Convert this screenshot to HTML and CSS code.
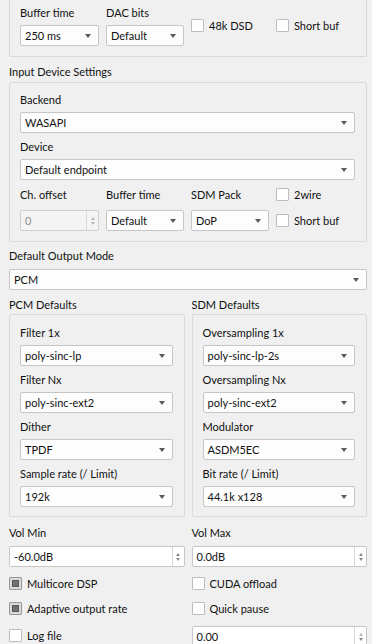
FILE: index.html
```html
<!DOCTYPE html>
<html lang="en">
<head>
    <meta charset="UTF-8">
    <title>Device Settings</title>
    <link rel="stylesheet" href="styles.css">
</head>
<body>
    <div class="page">
        <div class="group group-top">
            <div class="grid4">
                <div class="field">
                    <div class="lbl">Buffer time</div>
                    <div class="combo">250 ms</div>
                </div>
                <div class="field">
                    <div class="lbl">DAC bits</div>
                    <div class="combo">Default</div>
                </div>
                <label class="check mid"><span class="box"></span>48k DSD</label>
                <label class="check mid"><span class="box"></span>Short buf</label>
            </div>
        </div>

        <div class="title">Input Device Settings</div>
        <div class="group">
            <div class="lbl">Backend</div>
            <div class="combo gap">WASAPI</div>
            <div class="lbl">Device</div>
            <div class="combo">Default endpoint</div>
            <div class="grid4 rows">
                <div class="lbl flat">Ch. offset</div>
                <div class="lbl flat">Buffer time</div>
                <div class="lbl flat">SDM Pack</div>
                <label class="check"><span class="box"></span>2wire</label>
                <div class="spin disabled">
                    <span class="val">0</span>
                    <span class="arrows"><i class="up"></i><i class="dn"></i></span>
                </div>
                <div class="combo">Default</div>
                <div class="combo">DoP</div>
                <label class="check"><span class="box"></span>Short buf</label>
            </div>
        </div>

        <div class="title mode">Default Output Mode</div>
        <div class="combo">PCM</div>

        <div class="cols defaults">
            <div>
                <div class="title sub">PCM Defaults</div>
                <div class="group tall">
                    <div class="lbl">Filter 1x</div>
                    <div class="combo gap">poly-sinc-lp</div>
                    <div class="lbl">Filter Nx</div>
                    <div class="combo gap">poly-sinc-ext2</div>
                    <div class="lbl">Dither</div>
                    <div class="combo gap">TPDF</div>
                    <div class="lbl">Sample rate (/ Limit)</div>
                    <div class="combo">192k</div>
                </div>
            </div>
            <div>
                <div class="title sub">SDM Defaults</div>
                <div class="group tall">
                    <div class="lbl">Oversampling 1x</div>
                    <div class="combo gap">poly-sinc-lp-2s</div>
                    <div class="lbl">Oversampling Nx</div>
                    <div class="combo gap">poly-sinc-ext2</div>
                    <div class="lbl">Modulator</div>
                    <div class="combo gap">ASDM5EC</div>
                    <div class="lbl">Bit rate (/ Limit)</div>
                    <div class="combo">44.1k x128</div>
                </div>
            </div>
        </div>

        <div class="cols vol">
            <div>
                <div class="lbl">Vol Min</div>
                <div class="spin">
                    <span class="val">-60.0dB</span>
                    <span class="arrows"><i class="up"></i><i class="dn"></i></span>
                </div>
            </div>
            <div>
                <div class="lbl">Vol Max</div>
                <div class="spin">
                    <span class="val">0.0dB</span>
                    <span class="arrows"><i class="up"></i><i class="dn"></i></span>
                </div>
            </div>
        </div>

        <div class="cols opts">
            <label class="check"><span class="box on"></span>Multicore DSP</label>
            <label class="check"><span class="box"></span>CUDA offload</label>
            <label class="check"><span class="box on"></span>Adaptive output rate</label>
            <label class="check"><span class="box"></span>Quick pause</label>
            <label class="check"><span class="box"></span>Log file</label>
            <div class="spin">
                <span class="val">0.00</span>
                <span class="arrows dim"><i class="up"></i><i class="dn"></i></span>
            </div>
        </div>
    </div>
</body>
</html>
```

FILE: styles.css
```css
body { margin: 0; background: #f0f0f0; font-family: Lato, "Noto Sans", sans-serif; font-size: 11px; color: #111; overflow: hidden; }
.page { padding: 0 5px 0 9px; }

.group { border: 1px solid #d9d9d9; border-radius: 2px; padding: 10px 11px 10px 10px; }
.group-top { border-top: none; border-radius: 0 0 2px 2px; padding-top: 6px; padding-bottom: 10px; }
.group.tall { padding-top: 11px; padding-bottom: 9px; }

.title { line-height: 13px; margin: 8px 0 4px; white-space: nowrap; }
.title.mode { margin: 7px 0 7px; }
.title.sub { margin: 8px 0 3px; }

.lbl { line-height: 13px; height: 13px; margin-bottom: 6px; white-space: nowrap; }
.lbl.flat { margin: 0; align-self: center; }

.combo { height: 21px; box-sizing: border-box; border: 1px solid #c6c6c6; border-radius: 2px; background: #fdfdfd; display: flex; align-items: center; justify-content: space-between; padding: 0 7px 0 4px; white-space: nowrap; }
.combo::after { content: ""; border-left: 3.5px solid transparent; border-right: 3.5px solid transparent; border-top: 4px solid #5a5a5a; }
.combo.gap { margin-bottom: 7px; }

.grid4 { display: grid; grid-template-columns: 79px 78px 78px 1fr; column-gap: 7px; }
.grid4.rows { margin-top: 4px; grid-template-rows: 20px 21px; row-gap: 6px; }

.check { display: flex; align-items: center; gap: 5px; white-space: nowrap; }
.check.mid { align-self: center; margin-top: -1px; }
.box { width: 13px; height: 13px; box-sizing: border-box; border: 1px solid #bdbdbd; border-radius: 1px; background: #fff; display: flex; align-items: center; justify-content: center; }
.box.on { background: #dadada; border-color: #9a9a9a; }
.box.on::after { content: ""; width: 7px; height: 7px; box-sizing: border-box; background: #707070; border: 1px solid #5a5a5a; }

.spin { height: 21px; box-sizing: border-box; border: 1px solid #c6c6c6; border-radius: 2px; background: #fff; display: flex; }
.spin .val { flex: 1; display: flex; align-items: center; padding-left: 4px; }
.spin .arrows { width: 11px; border-left: 1px solid #d8d8d8; display: flex; flex-direction: column; align-items: center; justify-content: center; gap: 2px; }
.spin .up { border-left: 2.5px solid transparent; border-right: 2.5px solid transparent; border-bottom: 3px solid #8a8a8a; }
.spin .dn { border-left: 2.5px solid transparent; border-right: 2.5px solid transparent; border-top: 3px solid #8a8a8a; }
.spin .arrows.dim .up { border-bottom-color: #b8b8b8; }
.spin.disabled { background: #f4f4f4; border-color: #cfcfcf; color: #8e8e8e; }
.spin.disabled .up { border-bottom-color: #b4b4b4; }
.spin.disabled .dn { border-top-color: #b4b4b4; }

.cols { display: grid; grid-template-columns: 1fr 1fr; column-gap: 7px; }
.vol { margin-top: 9px; }
.vol .lbl { margin-bottom: 7px; }
.opts { margin-top: 6px; grid-template-rows: 21px 21px 21px; row-gap: 4px; }
.opts > :nth-child(n+5) { margin-top: 3px; }
```
